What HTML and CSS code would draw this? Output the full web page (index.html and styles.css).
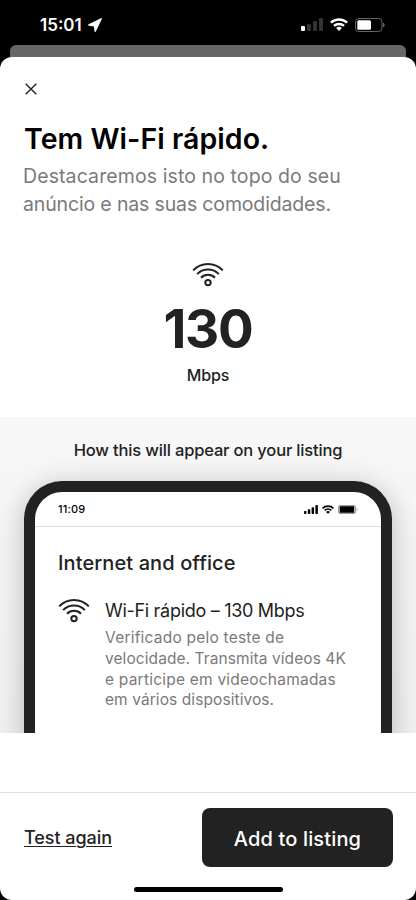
FILE: index.html
```html
<!DOCTYPE html>
<html lang="pt">
<head>
<meta charset="utf-8">
<meta name="viewport" content="width=device-width, initial-scale=1">
<title>Wi-Fi</title>
<link rel="stylesheet" href="styles.css">
</head>
<body>
<svg class="defs" width="0" height="0" aria-hidden="true">
  <symbol id="wifi-line" viewBox="0 0 32 26">
    <g fill="none" stroke="currentColor" stroke-width="2">
      <path d="M1.2 9.4a20.3 20.3 0 0 1 29.6 0"/>
      <path d="M5.1 13.1a15 15 0 0 1 21.8 0"/>
      <path d="M9 16.8a9.7 9.7 0 0 1 14 0"/>
      <circle cx="16" cy="21.6" r="2.7"/>
    </g>
  </symbol>
  <symbol id="wifi-solid" viewBox="0 0 18 13">
    <g fill="none" stroke="currentColor" stroke-width="2.5">
      <path d="M.9 4.7a11.7 11.7 0 0 1 16.2 0"/>
      <path d="M4 7.9a7.2 7.2 0 0 1 10 0"/>
    </g>
    <path fill="currentColor" d="M9 13 6.1 10.1a4.2 4.2 0 0 1 5.8 0z"/>
  </symbol>
</svg>
<div class="screen">
  <header class="status">
    <div class="clock"><span class="time">15:01</span>
      <svg width="14" height="14" viewBox="0 0 14 14"><path fill="#fff" stroke="#fff" stroke-width="1.4" stroke-linejoin="round" d="M13.2.8.9 7l5.6.9.7 5.3z"/></svg>
    </div>
    <div class="indicators">
      <svg width="22" height="14" viewBox="0 0 22 14"><rect y="8" width="4" height="5" rx="1" fill="#fff"/><g fill="#333"><rect x="6" y="6" width="4" height="7" rx="1"/><rect x="12" y="3" width="4" height="10" rx="1"/><rect x="18" y="0" width="4" height="13" rx="1"/></g></svg>
      <svg class="wifi" width="18" height="13"><use href="#wifi-solid"/></svg>
      <svg width="30" height="14" viewBox="0 0 30 14"><rect x=".5" y=".5" width="26.5" height="13" rx="3.5" fill="none" stroke="#666"/><rect x="2.3" y="2.3" width="13.7" height="9.4" rx="1.5" fill="#fff"/><path fill="#666" d="M28 4.7q1.7.6 1.7 2.3T28 9.3z"/></svg>
    </div>
  </header>
  <div class="under-card"></div>
  <main class="sheet">
    <button class="close" aria-label="Fechar"><svg width="12" height="12" viewBox="0 0 12 12"><path fill="none" stroke="#222" stroke-width="1.4" d="m.7.7 10.6 10.6M11.3.7.7 11.3"/></svg></button>
    <h1 class="title">Tem Wi-Fi rápido.</h1>
    <p class="subtitle"><span class="s1">Destacaremos isto no topo do seu</span><br><span class="s2">anúncio e nas suas comodidades.</span></p>
    <section class="result">
      <svg class="result-icon" width="32" height="26"><use href="#wifi-line"/></svg>
      <div class="speed">130</div>
      <div class="unit">Mbps</div>
    </section>
    <section class="preview">
      <h2 class="preview-title">How this will appear on your listing</h2>
      <div class="phone">
        <div class="phone-bar">
          <span class="phone-time">11:09</span>
          <div class="phone-icons">
            <svg width="14" height="9" viewBox="0 0 14 9"><rect y="6" width="2.5" height="3" rx=".7"/><rect x="3.8" y="4.3" width="2.5" height="4.7" rx=".7"/><rect x="7.6" y="2.2" width="2.5" height="6.8" rx=".7"/><rect x="11.4" width="2.5" height="9" rx=".7"/></svg>
            <svg width="12" height="9"><use href="#wifi-solid"/></svg>
            <svg width="20" height="9" viewBox="0 0 20 9"><rect x=".5" y=".5" width="17" height="8" rx="1.5" fill="#ddd" stroke="#999"/><rect x="1.7" y="1.3" width="14.4" height="6.4" rx=".5"/><path fill="#999" d="M18.5 3q1 .3 1 1.5t-1 1.5z"/></svg>
          </div>
        </div>
        <div class="phone-body">
          <h3 class="group">Internet and office</h3>
          <div class="amenity">
            <svg class="amenity-icon" width="32" height="26"><use href="#wifi-line"/></svg>
            <div>
              <div class="amenity-name">Wi-Fi rápido – 130 Mbps</div>
              <p class="amenity-text"><span class="t1">Verificado pelo teste de</span><br><span class="t2">velocidade. Transmita vídeos 4K</span><br><span class="t3">e participe em videochamadas</span><br><span class="t4">em vários dispositivos.</span></p>
            </div>
          </div>
        </div>
      </div>
    </section>
    <footer class="actions">
      <a class="again">Test again</a>
      <button class="add">Add to listing</button>
    </footer>
    <div class="home"></div>
  </main>
</div>
</body>
</html>
```
FILE: styles.css
```css
* { box-sizing: border-box; }
body, h1, h2, h3, p { margin: 0; }
button { border: 0; padding: 0; background: none; font: inherit; }
body { background: #000; font-family: Inter, Roboto, sans-serif; color: #222; white-space: nowrap; }
svg { display: block; flex: none; }
.defs { position: absolute; }
.screen { display: flex; flex-direction: column; width: 416px; height: 900px; overflow: hidden; }
.status { display: flex; justify-content: space-between; height: 45px; padding: 17px 31px 0 40px; color: #fff; }
.clock { display: flex; gap: 6px; height: 15px; line-height: 17px; font-size: 17px; font-weight: 600; }
.clock svg { margin-top: 1px; }
.indicators { display: flex; gap: 7px; align-items: flex-start; padding-top: 1px; }
.under-card { height: 24px; margin: 0 10px -12px; border-radius: 6px 6px 0 0; background: #666; }
.sheet { position: relative; display: flex; flex-direction: column; flex: 1; min-height: 0; border-radius: 12px; background: #fff; }
.close { align-self: flex-start; margin: 26px 0 0 25px; }
.title { margin: 26px 0 0 24px; font-size: 28.5px; line-height: 36px; font-weight: 600; color: #000; letter-spacing: .05px; }
.subtitle { margin: 6px 0 0 23px; font-size: 19.5px; line-height: 27.5px; font-weight: 400; color: #7a7a7a; }
.s1 { letter-spacing: .1px; }
.s2 { letter-spacing: -.15px; }
.result { display: flex; flex-direction: column; align-items: center; margin-top: 43px; height: 156px; }
.speed { margin-top: 10px; font-size: 53px; line-height: 64px; font-weight: 700; letter-spacing: -1.2px; }
.unit { margin-top: 4px; font-size: 16px; line-height: 20px; font-weight: 500; letter-spacing: -.1px; }
.preview { height: 316px; padding: 22px 24px 0; overflow: hidden; background: linear-gradient(#f7f7f7, #f1f1f1); }
.preview-title { height: 42px; font-size: 16.5px; line-height: 22px; font-weight: 500; letter-spacing: -.17px; text-align: center; }
.phone { height: 300px; border: 11px solid #222; border-bottom: 0; border-radius: 38px 38px 0 0; background: #fff; box-shadow: 0 5px 28px rgba(0,0,0,.24); }
.phone-bar { display: flex; justify-content: space-between; align-items: center; height: 35px; padding: 0 23px; border-bottom: 1px solid #ddd; }
.phone-time { font-size: 11px; font-weight: 500; letter-spacing: .2px; color: #000; }
.phone-icons { display: flex; gap: 4px; color: #000; fill: #000; }
.phone-body { padding: 23px 0 0 23px; }
.group { font-size: 20px; line-height: 26px; font-weight: 500; letter-spacing: .1px; }
.amenity { display: flex; gap: 15px; margin-top: 21px; }
.amenity-name { padding-top: 1px; font-size: 18px; line-height: 26px; letter-spacing: -.3px; }
.amenity-text { margin-top: 4px; font-size: 15.5px; line-height: 20.8px; font-weight: 400; color: #7a7a7a; letter-spacing: .08px; }
.t1, .t3 { letter-spacing: .22px; }
.actions { display: flex; justify-content: space-between; align-items: flex-start; height: 95px; margin-top: 59px; padding: 15px 23px 0 24px; border-top: 1px solid #ddd; }
.again { margin-top: 18px; font-size: 18px; line-height: 24px; font-weight: 500; letter-spacing: -.05px; text-decoration: underline; text-underline-offset: 2px; text-decoration-thickness: 1px; text-decoration-skip-ink: auto; }
.add { width: 191px; height: 59px; padding-top: 2px; border-radius: 8px; background: #222; color: #fff; font-size: 20px; font-weight: 500; letter-spacing: .15px; }
.home { width: 149px; height: 5px; margin: 0 auto; border-radius: 3px; background: #000; }
```
